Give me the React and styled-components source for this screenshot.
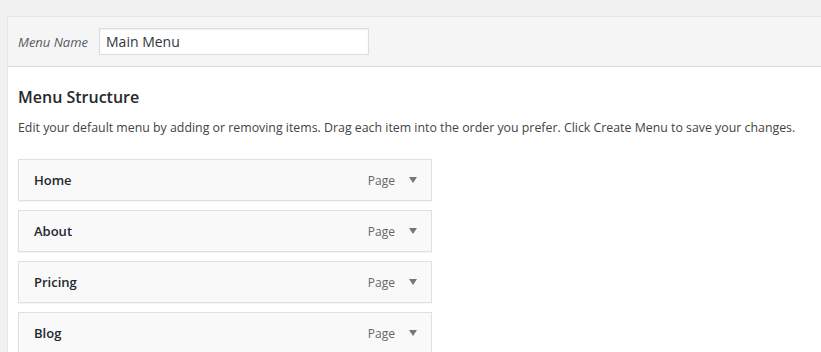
import React from "react";
import styled, { createGlobalStyle } from "styled-components";

const GlobalStyle = createGlobalStyle`
  html, body {
    margin: 0;
    padding: 0;
    background: #f1f1f1;
    font-family: "Open Sans", "Noto Sans", sans-serif;
    color: #23282d;
  }
`;

const Page = styled.div`
  height: 352px;
  overflow: hidden;
  padding: 16px 0 0 7px;
  box-sizing: border-box;
`;

const Panel = styled.div`
  background: #fff;
  border: 1px solid #e5e5e5;
  border-right: none;
  box-shadow: 0 1px 1px rgba(0, 0, 0, 0.04);
  min-height: 400px;
`;

const HeaderBar = styled.div`
  display: flex;
  align-items: center;
  height: 50px;
  padding: 0 10px;
  background: #f5f5f5;
  border-bottom: 1px solid #dddddd;
  box-sizing: border-box;
`;

const NameLabel = styled.label`
  font-size: 13px;
  font-style: italic;
  color: #555d66;
  margin-right: 11px;
`;

const NameInput = styled.input`
  width: 270px;
  height: 27px;
  box-sizing: border-box;
  border: 1px solid #dddddd;
  box-shadow: inset 0 1px 2px rgba(0, 0, 0, 0.07);
  padding: 0 6px;
  font-family: inherit;
  font-size: 14px;
  color: #32373c;
  background: #fff;
  outline: none;
`;

const Body = styled.div`
  padding: 18px 10px 0;
`;

const Title = styled.h3`
  margin: 0;
  font-size: 16px;
  font-weight: 600;
  line-height: 24px;
  color: #23282d;
`;

const Description = styled.p`
  margin: 9px 0 21px;
  font-size: 12.35px;
  line-height: 20px;
  color: #444;
`;

const ItemList = styled.ul`
  list-style: none;
  margin: 0;
  padding: 0;
  display: flex;
  flex-direction: column;
  gap: 9px;
  width: 414px;
`;

const Item = styled.li`
  display: flex;
  align-items: center;
  height: 42px;
  box-sizing: border-box;
  padding: 0 14px 0 15px;
  background: #f9f9f9;
  border: 1px solid #e0e0e0;
  box-shadow: 0 1px 1px rgba(0, 0, 0, 0.04);
`;

const ItemTitle = styled.span`
  flex: 1;
  font-size: 13px;
  font-weight: 600;
  color: #23282d;
`;

const ItemType = styled.span`
  font-size: 12px;
  color: #666;
  margin-right: 14px;
`;

const Toggle = styled.span`
  width: 0;
  height: 0;
  border-left: 4px solid transparent;
  border-right: 4px solid transparent;
  border-top: 6px solid #72777c;
`;

const items = ["Home", "About", "Pricing", "Blog"];

export default function App() {
  return (
    <>
      <GlobalStyle />
      <Page>
        <Panel>
          <HeaderBar>
            <NameLabel>Menu Name</NameLabel>
            <NameInput defaultValue="Main Menu" />
          </HeaderBar>
          <Body>
            <Title>Menu Structure</Title>
            <Description>
              Edit your default menu by adding or removing items. Drag each item
              into the order you prefer. Click Create Menu to save your changes.
            </Description>
            <ItemList>
              {items.map((item) => (
                <Item key={item}>
                  <ItemTitle>{item}</ItemTitle>
                  <ItemType>Page</ItemType>
                  <Toggle />
                </Item>
              ))}
            </ItemList>
          </Body>
        </Panel>
      </Page>
    </>
  );
}
